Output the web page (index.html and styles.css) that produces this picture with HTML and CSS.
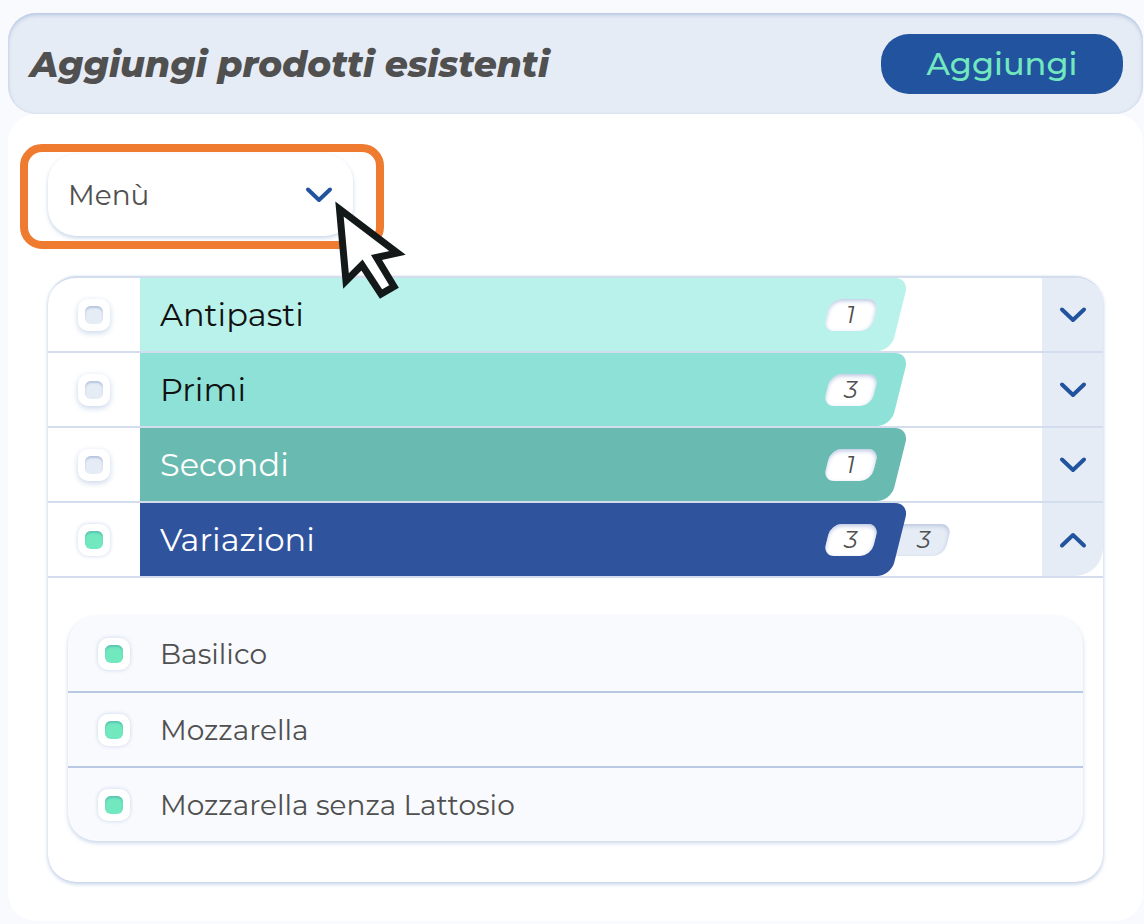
FILE: index.html
```html
<!DOCTYPE html>
<html lang="it">
<head>
<meta charset="utf-8">
<meta name="viewport" content="width=device-width, initial-scale=1">
<title>Aggiungi prodotti esistenti</title>
<link rel="stylesheet" href="styles.css">
</head>
<body>
<svg class="symbols" aria-hidden="true">
  <symbol id="chevron" viewBox="0 0 28 18"><path d="M3 3.5 14 14 25 3.5"/></symbol>
</svg>
<main class="page">
  <header class="header">
    <h1 class="title">Aggiungi prodotti esistenti</h1>
    <button class="add" type="button">Aggiungi</button>
  </header>
  <section class="card">
    <div class="highlight">
      <div class="picker">
        <select class="picker-select" aria-label="Menù"><option>Menù</option></select>
        <svg class="chevron picker-chevron" aria-hidden="true"><use href="#chevron"/></svg>
      </div>
      <svg class="cursor" viewBox="0 0 72 98" aria-hidden="true"><path d="M5.500 8 12 80 28 64 47 93 60 85.500 42.500 56.500 63.500 52Z"/></svg>
    </div>
    <div class="list">
      <div class="row">
        <div class="pick"><input class="check" type="checkbox" id="antipasti"></div>
        <div class="middle">
          <label class="bar antipasti" for="antipasti"><span class="name">Antipasti</span><span class="badge">1</span></label>
        </div>
        <button class="toggle" type="button" aria-label="Apri Antipasti" aria-expanded="false"><svg class="chevron"><use href="#chevron"/></svg></button>
      </div>
      <div class="row">
        <div class="pick"><input class="check" type="checkbox" id="primi"></div>
        <div class="middle">
          <label class="bar primi" for="primi"><span class="name">Primi</span><span class="badge">3</span></label>
        </div>
        <button class="toggle" type="button" aria-label="Apri Primi" aria-expanded="false"><svg class="chevron"><use href="#chevron"/></svg></button>
      </div>
      <div class="row">
        <div class="pick"><input class="check" type="checkbox" id="secondi"></div>
        <div class="middle">
          <label class="bar secondi" for="secondi"><span class="name">Secondi</span><span class="badge">1</span></label>
        </div>
        <button class="toggle" type="button" aria-label="Apri Secondi" aria-expanded="false"><svg class="chevron"><use href="#chevron"/></svg></button>
      </div>
      <div class="row">
        <div class="pick"><input class="check" type="checkbox" id="variazioni" checked></div>
        <div class="middle">
          <label class="bar variazioni" for="variazioni"><span class="name">Variazioni</span><span class="badge">3</span></label>
          <span class="badge selected">3</span>
        </div>
        <button class="toggle last" type="button" aria-label="Chiudi Variazioni" aria-expanded="true"><svg class="chevron up"><use href="#chevron"/></svg></button>
      </div>
      <div class="items">
        <label class="item"><input class="check" type="checkbox" checked>Basilico</label>
        <label class="item"><input class="check" type="checkbox" checked>Mozzarella</label>
        <label class="item"><input class="check" type="checkbox" checked>Mozzarella senza Lattosio</label>
      </div>
    </div>
  </section>
</main>
</body>
</html>
```
FILE: styles.css
```css
* { box-sizing: border-box; }
body {
  margin: 0;
  background: #f9fafe;
  color: #505050;
  font-family: Montserrat, Inter, sans-serif;
  font-size: 28px;
}
button, select { font: inherit; }
.symbols { position: absolute; width: 0; height: 0; }
.page { padding: 13px 1px 2px 8px; }
.header {
  display: flex;
  align-items: center;
  justify-content: space-between;
  min-height: 101px;
  padding: 0 20px 0 22px;
  border-radius: 28px;
  background: #e6ecf5;
  box-shadow: inset 0 2px 4px #b4c5e1, inset 0 0 2px #d5dfee;
}
.title { margin: 0; font-size: 36px; font-style: italic; font-weight: 800; }
.add {
  width: 242px;
  height: 60px;
  border: 0;
  border-radius: 28px;
  background: #22539e;
  color: #72e8bf;
  font-size: 32px;
  font-weight: 500;
}
.card { padding: 30px 40px 39px; border-radius: 28px; background: #fff; }
.highlight {
  position: relative;
  width: 364px;
  margin: 0 0 27px -28px;
  padding: 2px 23px 5px 20px;
  border: 8px solid #ef7b30;
  border-radius: 22px;
}
.picker { position: relative; }
.picker-select {
  display: block;
  width: 100%;
  height: 82px;
  padding: 0 20px;
  border: 0;
  border-radius: 28px;
  background: #fff;
  box-shadow: 0 2px 4px #c8d5e9;
  color: #505050;
  appearance: none;
}
.chevron {
  display: block;
  width: 28px;
  height: 18px;
  fill: none;
  stroke: #22539e;
  stroke-width: 4;
  stroke-linecap: round;
  stroke-linejoin: round;
}
.up { transform: rotate(180deg); }
.picker-chevron { position: absolute; top: 32px; right: 20px; pointer-events: none; }
.cursor {
  position: absolute;
  z-index: 3;
  top: 49px;
  left: 306px;
  width: 72px;
  height: 98px;
  fill: #fff;
  stroke: #131819;
  stroke-width: 7;
  pointer-events: none;
}
.list {
  border-top: 2px solid #d3dded;
  border-radius: 28px;
  box-shadow: 0 2px 4px #bfcee6, 0 0 2px #e3e9f3;
  overflow: hidden;
}
.row {
  display: grid;
  grid-template-columns: 92px 1fr 61px;
  height: 75px;
  border-bottom: 2px solid #d3dded;
}
.pick { display: flex; align-items: center; justify-content: center; }
.check {
  flex: none;
  width: 32px;
  height: 32px;
  margin: 0;
  padding: 7px;
  border-radius: 10px;
  background: #fff;
  box-shadow: 0 2px 6px #c8d5e9;
  appearance: none;
}
.check::before {
  content: "";
  display: block;
  width: 18px;
  height: 18px;
  border-radius: 6px;
  background: #e6ecf5;
  box-shadow: inset 0 2px 2px #b4c5e1;
}
.check:checked { box-shadow: 0 0 4px #c8d5e9; }
.check:checked::before { background: #72e8bf; box-shadow: inset 0 2px 2px #5cc4b4; }
.middle { display: flex; align-items: center; }
.bar {
  position: relative;
  z-index: 1;
  display: flex;
  align-items: center;
  justify-content: space-between;
  width: 85%;
  height: 100%;
  padding: 0 30px 0 20px;
  overflow: hidden;
  color: #111;
  font-size: 32px;
}
.bar::before {
  content: "";
  position: absolute;
  z-index: -1;
  inset: 0 7px 0 -24px;
  border-radius: 14px;
  background: var(--tone);
  transform: skewX(-14deg);
}
.antipasti { --tone: #b9f2eb; }
.primi { --tone: #8de1d6; }
.secondi { --tone: #69bab0; color: #fff; }
.variazioni { --tone: #2f539d; color: #fff; }
.badge {
  position: relative;
  z-index: 0;
  width: 52px;
  color: #505050;
  font-size: 24px;
  font-style: italic;
  line-height: 32px;
  text-align: center;
}
.badge::before {
  content: "";
  position: absolute;
  z-index: -1;
  inset: 0 2px;
  border-radius: 11px;
  background: #fff;
  box-shadow: inset 0 2px 4px #b9c6e2;
  transform: skewX(-14deg);
}
.selected { margin-left: -9px; }
.selected::before { left: -12px; background: #e6ecf5; }
.toggle {
  display: flex;
  align-items: center;
  justify-content: center;
  padding: 0;
  border: 0;
  background: #e6ecf5;
}
.last { border-bottom-right-radius: 28px; }
.items {
  margin: 38px 20px 41px;
  border-radius: 28px;
  background: #f9fafe;
  box-shadow: 0 2px 4px #c8d5e9;
}
.item { display: flex; align-items: center; gap: 30px; height: 75px; padding-left: 30px; }
.item + .item { border-top: 2px solid #b9c9e3; }
```
